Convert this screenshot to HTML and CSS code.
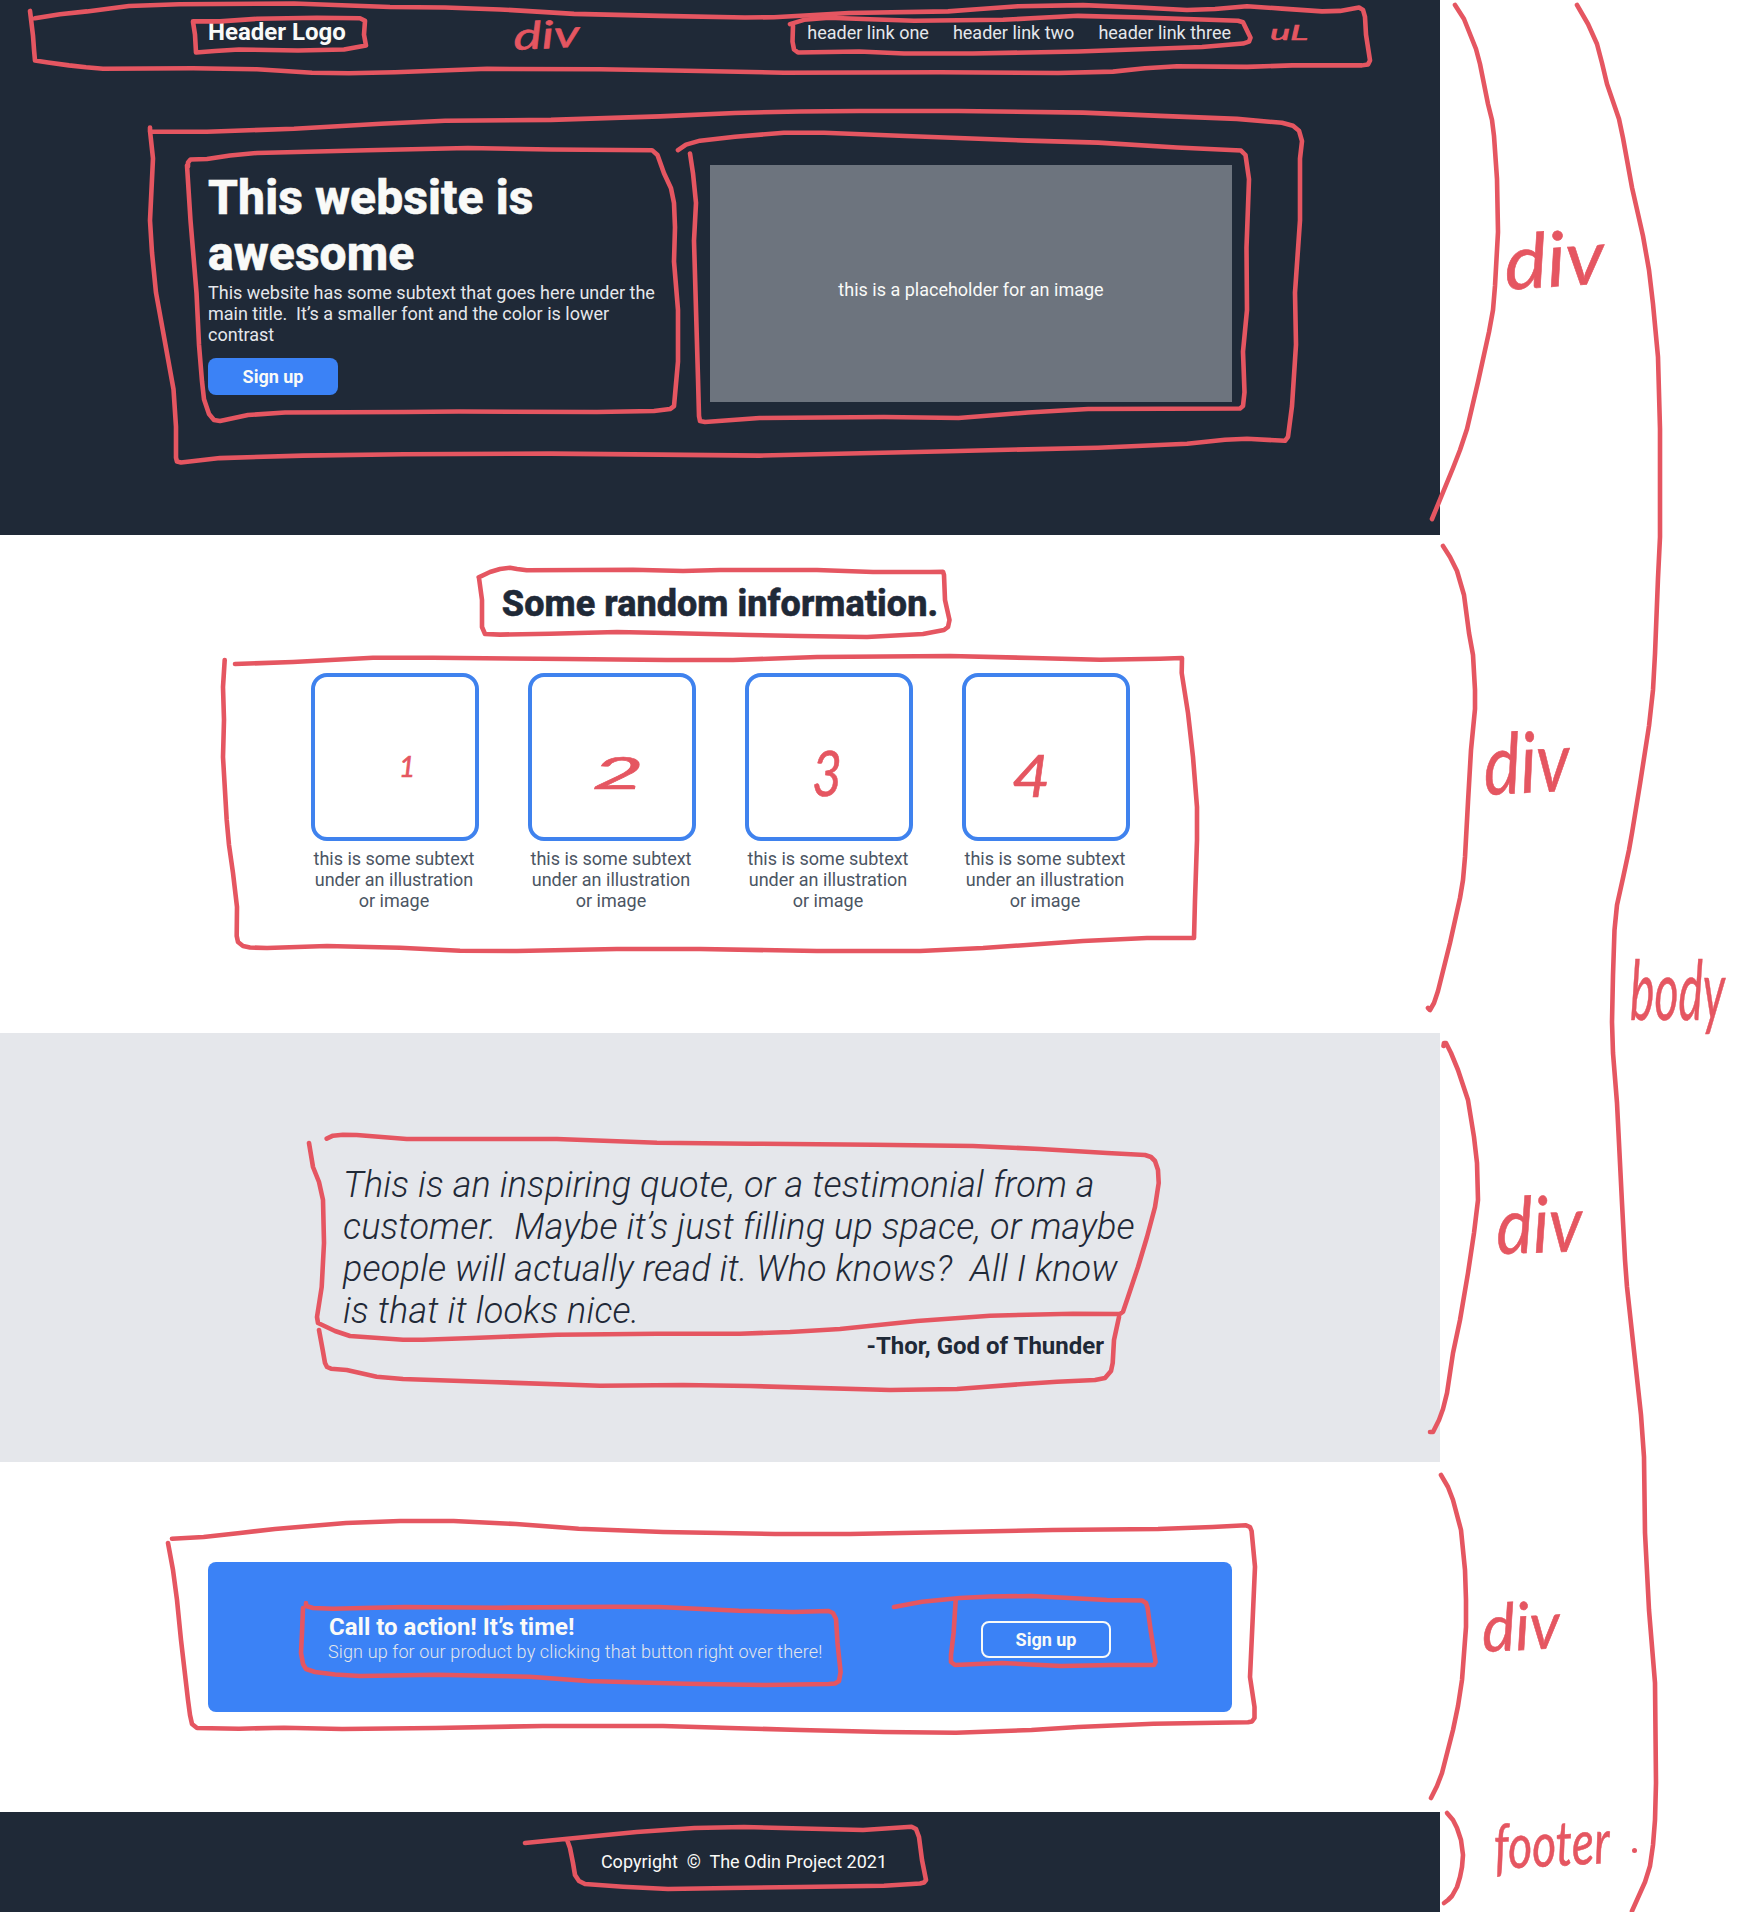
FILE: index.html
```html
<!DOCTYPE html>
<html lang="en">
<head>
<meta charset="utf-8">
<title>Landing page</title>
<link rel="stylesheet" href="styles.css">
</head>
<body>
<div class="page">
  <div class="hero">
    <div class="header">
      <div class="logo">Header Logo</div>
      <ul class="links">
        <li>header link one</li>
        <li>header link two</li>
        <li>header link three</li>
      </ul>
    </div>
    <div class="intro">
      <div class="intro-text">
        <h1>This website is awesome</h1>
        <p>This website has some subtext that goes here under the main title.&nbsp; It’s a smaller font and the color is lower contrast</p>
        <button class="btn">Sign up</button>
      </div>
      <div class="placeholder">this is a placeholder for an image</div>
    </div>
  </div>

  <div class="info">
    <h2>Some random information.</h2>
    <div class="cards">
      <div class="card"><div class="box"></div><p>this is some subtext under an illustration or image</p></div>
      <div class="card"><div class="box"></div><p>this is some subtext under an illustration or image</p></div>
      <div class="card"><div class="box"></div><p>this is some subtext under an illustration or image</p></div>
      <div class="card"><div class="box"></div><p>this is some subtext under an illustration or image</p></div>
    </div>
  </div>

  <div class="quote">
    <blockquote>This is an inspiring quote, or a testimonial from a customer.&nbsp; Maybe it’s just filling up space, or maybe people will actually read it. Who knows?&nbsp; All I know is that it looks nice.</blockquote>
    <div class="author">-Thor, God of Thunder</div>
  </div>

  <div class="action">
    <div class="banner">
      <div class="banner-text">
        <h3>Call to action! It’s time!</h3>
        <p>Sign up for our product by clicking that button right over there!</p>
      </div>
      <button class="btn btn-outline">Sign up</button>
    </div>
  </div>

  <footer class="footer">Copyright&nbsp; ©&nbsp; The Odin Project 2021</footer>
</div>

<svg class="notes" width="1748" height="1912" viewBox="0 0 1748 1912">
  <g class="pen">
    <g transform="scale(1 .9905)">
      <!-- header -->
      <polyline points="30,11 33,36 34,50 35,61 48,63 69,66 86,68 103,69.5 193,69 257,70 312,73.4 349,74 395,73 487,69.5 600,70 660,71 784,73.4 940,73 1058,73.7 1113,72.3 1145,69 1177,66.8 1247,67.5 1292,66 1362,66 1368,65 1370,61 1366,35 1365,17 1363,10 1359,7.6 1340,11 1322,11.5 1282,8.7 1247,6.3 1215,9 1187,10 1140,7.5 1083,5.2 1018,6.3 980,9 948,11.5 849,13.2 774,17.4 745,17.7 660,16 574,14 500,9.5 445,7.6 390,7 294,3.5 179,4.2 129,6 87,11.5 60,14.3 35,18.4"/>
      <polyline points="193,21.6 220,21.6 257,19 317,18 360,18.5 365,21 364,35 366,46 344,50 298,51 239,50 215,51.5 196,53 195,35 193,22"/>
      <polyline points="790,24.3 804,20 829,18 870,19.5 914,21 1003,20 1040,18 1078,16 1143,17.7 1238,21 1243,22.5 1250.5,38 1249,42 1243,44 1202,47.5 1078,52 973,54 904,54 859,52 798,53 794,50 792.5,42 793,26"/>
      <!-- intro -->
      <polyline points="150,128.7 150,133 207,133 294,130 381,125 445,122 551,121 660,117.5 735,114 800,112.5 859,112 958,112 1083,113.7 1160,117 1237,120 1282,124 1293,127 1299,132 1302,142.5 1300,160 1300,222.5 1295,295.5 1296,348 1292,410 1288,441 1285,445 1247,443 1225,444 1187,448 1098,452 948.5,455.5 759.5,460 660,459 551,458 404,458.6 303,460 220,462.5 181,467 177,466 176,462 176,431 173.5,393 164,340 156,295.5 152,255 150,222.5 153,160 150,132"/>
      <polyline points="188,168 188,164 190.5,161 207,160.6 230,157 257,154.4 367,151.6 468,149.5 551,151 652,151.6 657.5,156.5 664,175 671,190 674,205 675,229.5 674,264 678,313 678,365 674,410 670,413 654,415 597,416 459,415.5 404,416 285,416.5 248,419 220,425 214,424 209,418 204,403 202,385 199,348 196.5,295.5 190.5,222.5 187,167"/>
      <polyline points="678,151.6 686,146 700,142 735,138 784,134 824,134 899,137 1028,142 1098,144 1177,149 1241,152 1245.5,156.5 1249,181 1246.5,250 1247,313 1243,355 1244.5,396 1243,410 1240,412.5 1088,413 1028,416.5 958.5,422 884,421 759.5,422 705,426 700,425 699,420 698,382 694,243 696,205 693,175 690,155"/>
    </g>
    <!-- information -->
    <polyline points="478.7,577.3 490,572 500,569 510,567.7 517,569 526.7,570.3 583,570 633,569.7 683,571 720,570 817,570 873,572 930,572 943,571.7 944,575 945,600 949.5,620 948,627 944,630 923,634 867,637 800,636 750,635 667,633 617,632 550,633.7 500,634.6 485,634 482,627 482,600 479,578"/>
    <polyline points="235,664 293,662 373,657.7 433,657.7 567,659 667,660 733,660 817,657 950,656 1033,658 1100,659.7 1160,658.7 1182,658 1181.7,673 1188,713 1193,757 1197,807 1197,840 1195,900 1194,938 1147,938 1083,941 983,948 920,951 817,951 700,949 617,949 517,951 460,950.7 400,947.7 327,946 267,948 250,947.5 243,946 238,942 236.7,936 237,907 233,873 229,845 226.7,820 223,757 224,720 223,687 224.7,660"/>
    <!-- quote -->
    <polyline points="326.7,1138.7 333,1135.7 343,1134.7 356.7,1135 406.7,1139 457,1139 557,1139 657,1142.7 750,1143.7 873,1144.7 973,1146 1040,1149 1107,1153 1145,1155 1151,1157 1155,1161 1158,1170 1158.7,1183 1155,1207 1147,1237 1138,1267 1128,1297 1123,1311.7 1120,1314 1073,1313.7 990,1315.7 917,1321 840,1329 790,1332 740,1333.7 657,1333.7 557,1334.7 473,1338 423,1339.7 403,1339.7 350,1336 335,1331 318,1323 317,1317 321.7,1287 324,1243 323,1200 319,1182 313,1167 309,1143"/>
    <polyline points="319,1330 322.7,1350 325,1363 327,1367 331,1368.7 346.7,1370 376.7,1376.7 403,1379 490,1382 600,1385.7 683,1385 750,1386 890,1390 957,1389 1023,1384 1057,1381.7 1095,1380 1105,1378 1111,1371 1112.7,1363 1114,1340 1119,1317"/>
    <!-- call to action -->
    <polyline points="172,1538.7 203.6,1537 240,1533 275,1529 346,1523 400,1521 453.6,1521 516,1524 578.6,1528.7 663,1532 775,1534 850,1534 968,1531.7 1052.5,1530 1158,1529 1212.5,1527 1246,1525.3 1250,1527 1251.6,1531 1255,1566.7 1252.5,1623 1250,1677 1254.5,1707 1254.5,1718 1252,1721.5 1248,1722.3 1153.5,1723.7 1078,1727 1031.5,1730 956,1732.7 884,1732 800,1730 730,1728 663,1726 543,1726 436,1728 342,1729 284,1727.7 239,1728.7 197,1728 192,1724 190,1715 188,1700 181,1640 177,1600 173,1570 168,1543"/>
    <polyline points="306,1603 306,1606 313,1608 333,1608.7 404.5,1607 498,1607.7 614,1606.7 659,1607 739,1610.7 793,1612 828.6,1611 833,1613 836,1619 837.5,1643 840.6,1672 839,1681 835,1683.5 828.6,1684 766,1685 686,1683.7 587.5,1681 529.5,1676.7 436,1674.7 360,1676 335,1674.5 315,1672 306,1669 303,1664 301,1653 302,1633 303,1608"/>
    <polyline points="894,1607 922,1601.7 960,1598 990,1596.5 1031.5,1596 1107,1600 1142,1600.5 1146,1603 1147.6,1608 1150.6,1630 1155.6,1662 1154,1665 1111.5,1665 1061,1666 1002,1663 977,1664 955,1665 951,1662 951,1655 953.6,1633 955.7,1600"/>
    <!-- footer -->
    <polyline points="525,1843 565,1839 636.6,1832 694.6,1828 744,1827 863,1830 911.5,1826.7 916,1829 919,1837 922,1860 926,1880 924,1882.5 920,1883.5 884,1885.7 800,1887 730,1888 668,1889 623,1886.7 585,1884 579,1881 575,1875 573,1863 570,1848 567.4,1840.7"/>
    <!-- section brackets -->
    <polyline points="1455,5 1464,19 1470,34 1476,49 1480,64 1488,104 1492,120 1494,136 1497,179 1498,232 1495,286 1493,310 1489,332 1478,382 1467,429 1460,450 1453,468 1432,519"/>
    <polyline points="1443,546 1450,557 1457,571 1464,595 1469,633 1473,655 1475,690 1475,709 1471,750 1468,802 1465,857 1463,880 1460,898 1450,943 1438,991 1434,1003 1430,1010 1428,1008"/>
    <polyline points="1443.5,1046 1444,1043 1446,1043 1451,1053 1458,1070 1468,1100 1474,1137 1477,1163 1478,1200 1474,1233 1468,1273 1460,1320 1453,1353 1447,1393 1443,1409 1439,1420 1433,1432 1430,1432"/>
    <polyline points="1441,1475 1448,1487 1453,1500 1461,1530 1465,1570 1466,1600 1466,1627 1462,1680 1458,1706 1453,1730 1442,1773 1437,1786 1431,1798"/>
    <polyline points="1447,1813 1453,1820 1457,1828 1461,1840 1463,1855 1462,1867 1460,1877 1457,1887 1452,1896 1448,1900 1444,1903"/>
    <polyline points="1577,5 1588,24 1597,44 1602,63 1607,84 1619,119 1623,138 1632,187.5 1643,236 1649,270 1653,304 1658,357 1660,429 1660,537 1658,578 1655,654 1653,690 1649,726 1640,784 1632,833 1629,850 1623,878 1617,905 1614.5,930 1613,975 1612,1022 1613,1053 1617,1103 1622,1203 1625,1260 1627,1287 1635,1360 1641,1415 1644,1457 1645,1533 1649,1610 1655,1683 1656,1783 1655,1820 1653,1845 1650,1866 1645,1882 1632,1911"/>
    <circle class="dot" cx="1634.500" cy="1850.500" r="2.500"/>
  </g>
  <g class="labels">
    <text font-size="38" transform="translate(514 50) rotate(-3)" textLength="66" lengthAdjust="spacingAndGlyphs">div</text>
    <text x="1270" y="40" font-size="21" textLength="38" lengthAdjust="spacingAndGlyphs">uL</text>
    <text font-size="76" transform="translate(1506 290) rotate(-4)" textLength="100" lengthAdjust="spacingAndGlyphs">div</text>
    <text font-size="84" transform="translate(1485 795) rotate(-3)" textLength="86" lengthAdjust="spacingAndGlyphs">div</text>
    <text font-size="78" transform="translate(1497 1254) rotate(-2)" textLength="86" lengthAdjust="spacingAndGlyphs">div</text>
    <text font-size="66" transform="translate(1483 1652) rotate(-3)" textLength="78" lengthAdjust="spacingAndGlyphs">div</text>
    <text font-size="84" transform="translate(1630 1020) scale(.55 1)">body</text>
    <text x="1494" y="1866" font-size="62" textLength="116" lengthAdjust="spacingAndGlyphs" transform="rotate(-3 1550 1850)">footer</text>
    <text x="399" y="777" font-size="28">1</text>
    <text x="592" y="789" font-size="44" textLength="52" lengthAdjust="spacingAndGlyphs">2</text>
    <text x="812" y="796" font-size="62" textLength="30" lengthAdjust="spacingAndGlyphs">3</text>
    <text x="1012" y="797" font-size="58" textLength="38" lengthAdjust="spacingAndGlyphs">4</text>
  </g>
</svg>
</body>
</html>
```

FILE: styles.css
```css
* { box-sizing: border-box; }

body {
  position: relative;
  margin: 0;
  width: 1748px;
  height: 1912px;
  overflow: hidden;
  background: #fff;
  font-family: Roboto, "Liberation Sans", sans-serif;
  font-size: 18px;
  line-height: 21px;
}

h1, h2, h3, p, ul, blockquote { margin: 0; padding: 0; }

.page { width: 1440px; }

.hero {
  height: 535px;
  padding: 18px 208px 0;
  background: #1f2937;
}

.header {
  display: flex;
  justify-content: space-between;
  align-items: center;
  height: 28px;
}

.logo {
  color: #f9faf8;
  font-size: 24px;
  font-weight: 700;
  line-height: 28px;
}

.links {
  display: flex;
  gap: 24px;
  margin-right: 1px;
  list-style: none;
  color: #e5e7eb;
}

.intro {
  display: flex;
  justify-content: space-between;
  margin-top: 119px;
}

.intro-text {
  width: 460px;
  padding-top: 5px;
}

.intro-text h1 {
  color: #f9faf8;
  font-size: 48px;
  font-weight: 800;
  line-height: 56px;
  letter-spacing: .08px;
  -webkit-text-stroke: .5px #f9faf8;
}

.intro-text p { color: #e5e7eb; }

.btn {
  display: block;
  width: 130px;
  height: 37px;
  padding: 0;
  border: 0;
  border-radius: 8px;
  background: #3b82f6;
  color: #f9faf8;
  font: 700 18px/21px Roboto, "Liberation Sans", sans-serif;
}

.intro-text .btn { margin-top: 13px; }

.placeholder {
  display: flex;
  align-items: center;
  justify-content: center;
  width: 522px;
  height: 237px;
  padding-top: 12px;
  background: #6d747e;
  color: #f9faf8;
}

.info {
  height: 498px;
  padding-top: 48px;
}

.info h2 {
  color: #1f2937;
  font-size: 36px;
  font-weight: 800;
  line-height: 42px;
  letter-spacing: .05px;
  text-align: center;
  -webkit-text-stroke: .5px #1f2937;
}

.cards {
  display: flex;
  justify-content: center;
  gap: 49px;
  margin-top: 48px;
}

.card { width: 168px; }

.box {
  height: 168px;
  border: 4px solid #3f82ee;
  border-radius: 16px;
}

.card p {
  margin-top: 7px;
  padding-right: 1px;
  color: #4b5563;
  text-align: center;
}

.quote {
  height: 429px;
  padding: 131px 336px 0 343px;
  background: #e5e7eb;
  color: #1f2937;
}

.quote blockquote {
  width: 800px;
  font-size: 36px;
  font-style: italic;
  font-weight: 300;
  line-height: 42px;
  letter-spacing: .15px;
}

.author {
  font-size: 24px;
  font-weight: 700;
  line-height: 28px;
  text-align: right;
}

.action {
  height: 350px;
  padding: 100px 208px 0;
}

.banner {
  display: flex;
  align-items: center;
  justify-content: space-between;
  height: 150px;
  padding: 5px 121px 0 120px;
  border-radius: 8px;
  background: #3b82f6;
}

.banner-text { margin-bottom: 5px; }

.banner h3 {
  padding-left: 1px;
  color: #f9faf8;
  font-size: 24px;
  font-weight: 700;
  line-height: 28px;
}

.banner p {
  color: #e5e7eb;
  font-weight: 300;
  letter-spacing: .13px;
}

.btn-outline { border: 2px solid #f9faf8; }

.footer {
  display: flex;
  align-items: center;
  justify-content: center;
  height: 100px;
  padding: 0 0 2px 48px;
  background: #1f2937;
  color: #f9faf8;
}

.notes {
  position: absolute;
  left: 0;
  top: 0;
}

.pen {
  fill: none;
  stroke: #e55661;
  stroke-width: 4.6;
  stroke-linecap: round;
  stroke-linejoin: round;
}

.pen .dot {
  fill: #e55661;
  stroke: none;
}

.labels {
  fill: #e55661;
  stroke: #e55661;
  stroke-width: .6;
  font-family: Lato, "Liberation Sans", sans-serif;
  font-style: italic;
}
```
